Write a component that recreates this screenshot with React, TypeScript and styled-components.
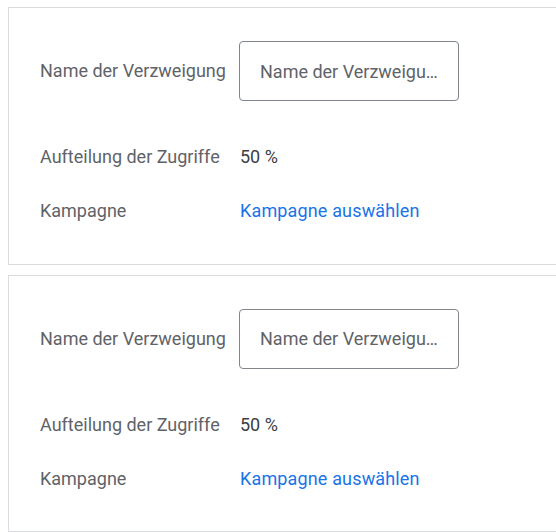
import React from "react";
import styled, { createGlobalStyle } from "styled-components";

const Global = createGlobalStyle`
  html, body { margin: 0; padding: 0; overflow: hidden; background: #fff; }
  body { font-family: Roboto, "Noto Sans", Arial, sans-serif; }
`;

const Page = styled.div`
  display: flex;
  flex-direction: column;
  gap: 10px;
  padding: 7px 0 0 8px;
  width: 560px;
`;

const Card = styled.section`
  box-sizing: border-box;
  height: 257.5px;
  border: 1px solid #dadce0;
  padding: 33px 0 0 31px;
  display: flex;
  flex-direction: column;
`;

const Row = styled.div<{ $top?: number }>`
  display: grid;
  grid-template-columns: 199px 1fr;
  align-items: center;
  margin-top: ${(p) => p.$top ?? 0}px;
`;

const Label = styled.div`
  font-size: 18px;
  line-height: 24px;
  color: #5f6368;
  white-space: nowrap;
`;

const Value = styled.div<{ $link?: boolean }>`
  font-size: 18px;
  line-height: 24px;
  padding-left: 1px;
  color: ${(p) => (p.$link ? "#1a73e8" : "#3c4043")};
  letter-spacing: ${(p) => (p.$link ? "0.15px" : "0")};
  cursor: ${(p) => (p.$link ? "pointer" : "default")};
  white-space: nowrap;
`;

const Input = styled.div`
  box-sizing: border-box;
  width: 220px;
  height: 60px;
  border: 1px solid #80868b;
  border-radius: 4px;
  padding: 0 20px;
  display: flex;
  align-items: center;
  font-size: 18px;
  color: #5f6368;
  overflow: hidden;
`;

const InputText = styled.span`
  white-space: nowrap;
  overflow: hidden;
  text-overflow: ellipsis;
  min-width: 0;
`;

function Branch() {
  return (
    <Card>
      <Row>
        <Label>Name der Verzweigung</Label>
        <Input>
          <InputText>Name der Verzweigung</InputText>
        </Input>
      </Row>
      <Row $top={44}>
        <Label>Aufteilung der Zugriffe</Label>
        <Value>50 %</Value>
      </Row>
      <Row $top={30}>
        <Label>Kampagne</Label>
        <Value $link>Kampagne auswählen</Value>
      </Row>
    </Card>
  );
}

export default function App() {
  return (
    <>
      <Global />
      <Page>
        <Branch />
        <Branch />
      </Page>
    </>
  );
}
